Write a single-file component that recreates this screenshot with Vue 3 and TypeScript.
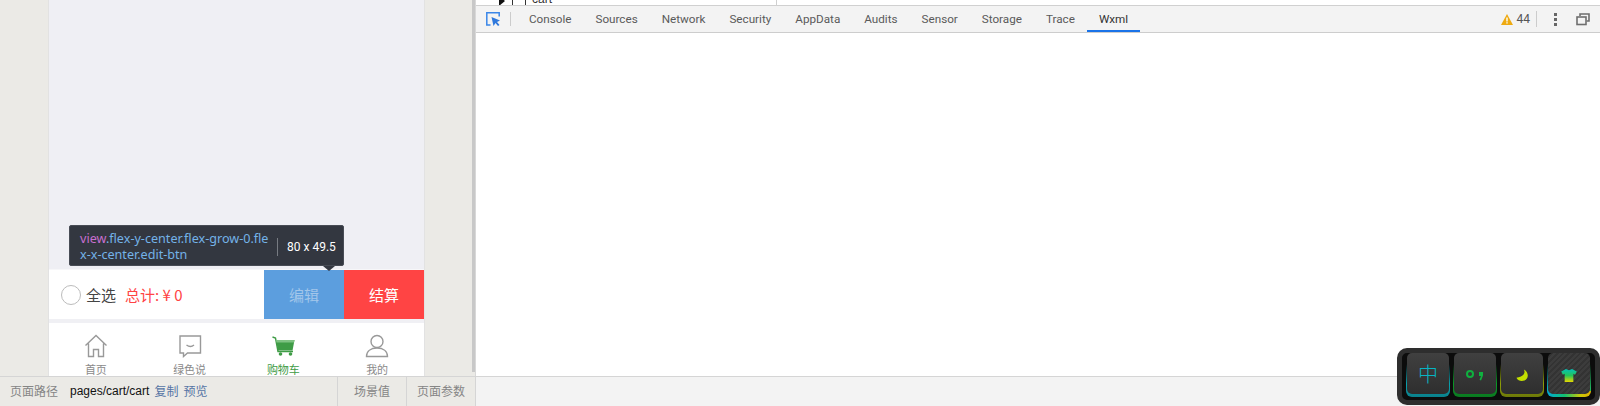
<script setup lang="ts">
const tabs: string[] = ['Console', 'Sources', 'Network', 'Security', 'AppData', 'Audits', 'Sensor', 'Storage', 'Trace', 'Wxml']
</script>

<template>
  <div class="root">
    <div class="main">
      <section class="sim">
        <div class="phone">
          <div class="page"></div>
          <div class="cartbar">
            <div class="check"></div>
            <span class="all">全选</span>
            <span class="total">总计: ¥ 0</span>
            <div class="edit">编辑</div>
            <div class="pay">结算</div>
          </div>
          <div class="tabbar">
            <div class="tabitem">
              <svg width="24" height="24" viewBox="0 0 24 24" fill="none" stroke="#999" stroke-width="1.4">
                <path d="M1.500 11.500 12 1.500l10.500 10M4.500 9.500V22.500H9.500V15.500H14.500V22.500H19.500V9.500" />
              </svg>
              <span>首页</span>
            </div>
            <div class="tabitem">
              <svg width="24" height="24" viewBox="0 0 24 24" fill="none" stroke="#999" stroke-width="1.4">
                <path d="M2 2H22.500V19H9.500L5.500 22.500V19H2Z" />
                <path d="M8.500 11Q12.500 14 16 11" />
              </svg>
              <span>绿色说</span>
            </div>
            <div class="tabitem active">
              <svg width="24" height="24" viewBox="0 0 24 24">
                <path d="M1.500 3 4.500 4 7 17.500H22" fill="none" stroke="#3f9c46" stroke-width="1.400" />
                <path d="M5 6H23.500L21.500 16.500H7Z" fill="#3f9c46" />
                <path d="M5 6H23.500L23 8.500H5.500Z" fill="#7fc282" />
                <circle cx="9.500" cy="20" r="1.800" fill="#3f9c46" />
                <circle cx="19.500" cy="20" r="1.800" fill="#3f9c46" />
              </svg>
              <span>购物车</span>
            </div>
            <div class="tabitem">
              <svg width="24" height="24" viewBox="0 0 24 24" fill="none" stroke="#999" stroke-width="1.4">
                <circle cx="12" cy="7.500" r="6" />
                <path d="M1.500 22.500C1.500 17 6 14 12 14S22.500 17 22.500 22.500Z" />
              </svg>
              <span>我的</span>
            </div>
          </div>
        </div>
        <div class="scroll"></div>
        <div class="tip">
          <div class="tipname"><span class="tipview">view</span>.flex-y-center.flex-grow-0.fle<br />x-x-center.edit-btn</div>
          <div class="tipsize">80 x 49.5</div>
          <i class="arrow"></i>
        </div>
      </section>

      <section class="devtools">
        <div class="tree">
          <div class="treeleft">
            <i class="caret"></i><i class="tick"></i><i class="tick"></i><span>cart</span>
          </div>
        </div>
        <div class="toolbar">
          <svg class="pick" width="14" height="14" viewBox="0 0 14 14" fill="none">
            <path d="M4.500 13H.8V.8H13.200V4.500" stroke="#3a86e8" stroke-width="1.500" />
            <path d="M5.500 5 14 8.500 11 10 13.500 13 12 14 9.500 11 7.500 14Z" fill="#2f78dc" />
          </svg>
          <i class="sep"></i>
          <div class="tabs">
            <span v-for="t in tabs" :key="t" class="tab" :class="{ on: t === 'Wxml' }">{{ t }}</span>
          </div>
          <div class="tools">
            <svg width="12" height="11" viewBox="0 0 12 11">
              <path d="M6 0 12 11H0Z" fill="#eeaa11" />
              <path d="M5.300 3.500H6.700V7.500H5.300ZM5.300 8.300H6.700V9.600H5.300Z" fill="#fff" />
            </svg>
            <span class="count">44</span>
            <i class="sep2"></i>
            <span class="dots"><i></i><i></i><i></i></span>
            <svg class="win" width="14" height="13" viewBox="0 0 14 13" fill="none" stroke="#6e6e6e" stroke-width="1.600">
              <path d="M4 3V1H13V8H10.500" />
              <rect x="1" y="4" width="9" height="7.500" />
            </svg>
          </div>
        </div>
        <div class="content"></div>
      </section>
    </div>

    <footer class="foot">
      <div class="crumbs">
        <span class="lab">页面路径</span>
        <span class="path">pages/cart/cart</span>
        <a>复制</a>
        <a>预览</a>
        <span class="cell first">场景值</span>
        <span class="cell second">页面参数</span>
      </div>
      <div class="footrest"></div>
    </footer>

    <div class="ime">
      <div class="key k1"><div class="cap"><span class="zh">中</span></div></div>
      <div class="key k2">
        <div class="cap">
          <svg width="18" height="11" viewBox="0 0 18 11" fill="none">
            <circle cx="4" cy="4" r="3" stroke="#0fb13f" stroke-width="2" />
            <path d="M13 2h4v3.500L15 10.500l-1.500-.7L15 6h-2Z" fill="#0fb13f" />
          </svg>
        </div>
      </div>
      <div class="key k3">
        <div class="cap">
          <svg width="13" height="13" viewBox="0 0 14 14">
            <path d="M8.500.5C10 3.500 9.500 8 .5 9.500 2 13 6 13.500 9 12.500 13.500 11 14.500 4 8.500.5Z" fill="#c3e000" />
          </svg>
        </div>
      </div>
      <div class="key k4">
        <div class="cap striped">
          <svg width="16" height="13" viewBox="0 0 18 15">
            <defs>
              <linearGradient id="shirt" x1="0" y1="0" x2="0" y2="1">
                <stop offset="0" stop-color="#05c0b8" />
                <stop offset=".5" stop-color="#22c45a" />
                <stop offset="1" stop-color="#e8d800" />
              </linearGradient>
            </defs>
            <path d="M5.500 0 9 1.500 12.500 0 18 3 16 6.500 14 5.500V15H4V5.500L2 6.500 0 3Z" fill="url(#shirt)" />
          </svg>
        </div>
      </div>
    </div>
  </div>
</template>

<style>
html, body { margin: 0; padding: 0; overflow: hidden; }
</style>

<style scoped>
.root {
  position: relative;
  width: 1600px;
  height: 406px;
  overflow: hidden;
  display: flex;
  flex-direction: column;
  font-family: "Noto Sans CJK SC", "Liberation Sans", sans-serif;
  background: #fff;
}
.main { display: flex; height: 376px; }
.sim {
  position: relative;
  width: 476px;
  flex: none;
  display: flex;
  background: #ebeae6;
  padding-left: 48px;
  box-sizing: border-box;
  border-right: 1px solid #d8d8d8;
}
.phone {
  width: 377px;
  height: 376px;
  display: flex;
  flex-direction: column;
  border-left: 1px solid #e2e2e2;
  border-right: 1px solid #e2e2e2;
  box-sizing: border-box;
  flex: none;
}
.page { height: 271px; background: #efeff4; }
.cartbar {
  height: 49px;
  display: flex;
  align-items: center;
  background: #fff;
  font-size: 15px;
  box-shadow: 0 -1px 0 #f7f7f9;
}
.check {
  width: 18px;
  height: 18px;
  border: 1px solid #bcbcbc;
  border-radius: 50%;
  margin-left: 12px;
}
.all { margin-left: 5px; color: #444; }
.total { margin-left: 9px; color: #ff4444; flex: 1; }
.edit, .pay {
  width: 80px;
  height: 49px;
  display: flex;
  align-items: center;
  justify-content: center;
  font-size: 15px;
}
.edit { background: #5c9ede; color: #a3c6ea; }
.pay { background: #ff4444; color: #fff; }
.tabbar {
  margin-top: 4px;
  flex: 1;
  background: #fff;
  display: grid;
  grid-template-columns: repeat(4, 1fr);
  box-shadow: 0 -4px 0 #f0f0f4;
}
.tabitem {
  display: flex;
  flex-direction: column;
  align-items: center;
  padding-top: 11px;
  font-size: 11px;
  line-height: 14px;
  color: #8a8a8a;
  gap: 4px;
}
.tabitem svg { display: block; flex: none; }
.tabitem.active { color: #3f9c46; }
.scroll { width: 3px; height: 372px; margin-left: 47px; background: #c8c8c8; flex: none; }
.tip {
  position: absolute;
  left: 69px;
  top: 225px;
  width: 275px;
  height: 41px;
  box-sizing: border-box;
  background: #333740;
  border: 1px solid #484c55;
  border-radius: 2px;
  display: flex;
  align-items: center;
  padding-left: 10px;
  font-family: "Noto Sans", "Liberation Sans", sans-serif;
  font-size: 12.6px;
  line-height: 16px;
  color: #74b3e8;
}
.tipname { width: 188px; white-space: nowrap; flex: none; padding-top: 3px; }
.tipview { color: #c86fd0; }
.tipsize {
  margin-left: 9px;
  padding-left: 9px;
  border-left: 1px solid #777b82;
  color: #fff;
  font-family: Roboto, sans-serif;
  font-size: 12px;
  line-height: 18px;
  white-space: nowrap;
  margin-top: 2px;
}
.arrow {
  position: absolute;
  right: 8px;
  bottom: -6px;
  border-left: 6px solid transparent;
  border-right: 6px solid transparent;
  border-top: 5px solid #333740;
}
.devtools { flex: 1; display: flex; flex-direction: column; min-width: 0; background: #fff; }
.tree { height: 6px; box-sizing: border-box; background: #fff; overflow: hidden; border-bottom: 1px solid #d0d0d0; }
.treeleft {
  width: 301px;
  height: 5px;
  box-sizing: border-box;
  border-right: 1px solid #d0d0d0;
  display: flex;
  align-items: flex-end;
  padding-left: 23px;
  font: 12px/12px "Liberation Sans", sans-serif;
  color: #333;
}
.treeleft span { margin-left: 6px; }
.caret { width: 0; height: 0; border-left: 6px solid #111; border-top: 5px solid transparent; border-bottom: 5px solid transparent; margin-bottom: -1px; }
.tick { width: 1px; height: 10px; background: #333; margin-left: 7px; }
.tick + .tick { margin-left: 12px; }
.toolbar {
  height: 27px;
  box-sizing: border-box;
  background: #f3f3f3;
  border-bottom: 1px solid #cdcdcd;
  display: flex;
  align-items: center;
}
.pick { margin-left: 10px; flex: none; }
.sep { width: 1px; height: 14px; background: #ccc; margin-left: 10px; flex: none; }
.tabs { display: flex; height: 26px; margin-left: 6px; }
.tab {
  padding: 1px 12px 0;
  height: 26px;
  line-height: 25px;
  box-sizing: border-box;
  font-family: Roboto, sans-serif;
  font-size: 11.7px;
  color: #5a5a5a;
}
.tab.on { color: #333; border-bottom: 2px solid #1a73e8; }
.tools { margin-left: auto; display: flex; align-items: center; padding-right: 10px; }
.count { margin-left: 4px; font: 12px Roboto, sans-serif; color: #555; }
.sep2 { width: 1px; height: 16px; background: #ccc; margin-left: 6px; }
.dots { display: flex; flex-direction: column; gap: 2px; margin-left: 17px; }
.dots i { width: 3px; height: 3px; background: #666; }
.win { margin-left: 19px; }
.content { flex: 1; background: #fff; }
.foot { height: 30px; display: flex; flex: none; }
.crumbs {
  width: 476px;
  flex: none;
  box-sizing: border-box;
  background: #ebeae6;
  border-top: 1px solid #d5d5d5;
  border-right: 1px solid #d5d5d5;
  display: flex;
  align-items: center;
  padding: 0 0 2px 10px;
  font-size: 12px;
  color: #858585;
}
.lab { width: 60px; }
.path { font-family: "Liberation Sans", sans-serif; color: #111; margin-right: 5px; }
.crumbs a { color: #5675a5; margin-right: 5px; }
.cell {
  height: 29px;
  line-height: 27px;
  box-sizing: border-box;
  border-left: 1px solid #d5d5d5;
  margin-bottom: -2px;
}
.first { margin-left: auto; width: 69px; padding-left: 16px; }
.second { width: 69px; padding-left: 10px; }
.footrest { flex: 1; background: #f3f3f3; border-top: 1px solid #d5d5d5; }
.ime {
  position: absolute;
  left: 1397px;
  top: 348px;
  width: 203px;
  height: 57px;
  box-sizing: border-box;
  background: #0c0c0c;
  border: 5px solid #2e2e2e;
  border-radius: 10px;
  display: flex;
  gap: 3px;
  padding: 0 4px;
  align-items: flex-start;
}
.key {
  width: 44px;
  height: 44px;
  border-radius: 6px;
  flex: none;
  box-sizing: border-box;
  padding: 0 1px 3px;
}
.cap {
  height: 100%;
  border-radius: 5px;
  background: linear-gradient(#404040, #2e2e2e);
  display: flex;
  align-items: center;
  justify-content: center;
  padding-top: 4px;
  box-sizing: border-box;
}
.striped {
  background: repeating-linear-gradient(135deg, #3c3c3c 0 2px, #333 2px 4px);
}
.k1 { background: linear-gradient(transparent 25%, #0aa0ae 70%, #0a7f8a); }
.k1 .cap { padding-top: 1px; }
.k2 { background: linear-gradient(transparent 25%, #0a9a26 70%, #0a7820); }
.k3 { background: linear-gradient(transparent 25%, #8f9f08 70%, #6c7808); }
.k4 {
  background:
    linear-gradient(90deg, #00a8d8, #12c070 40%, #c8c808 75%, #e0b000) bottom / 100% 6px no-repeat,
    linear-gradient(transparent 25%, #09b0c0 80%) left / 50% 100% no-repeat,
    linear-gradient(transparent 25%, #20b860 80%) right / 50% 100% no-repeat;
}
.zh { color: #07b5c4; font-size: 20px; line-height: 1; font-weight: 300; }
</style>
